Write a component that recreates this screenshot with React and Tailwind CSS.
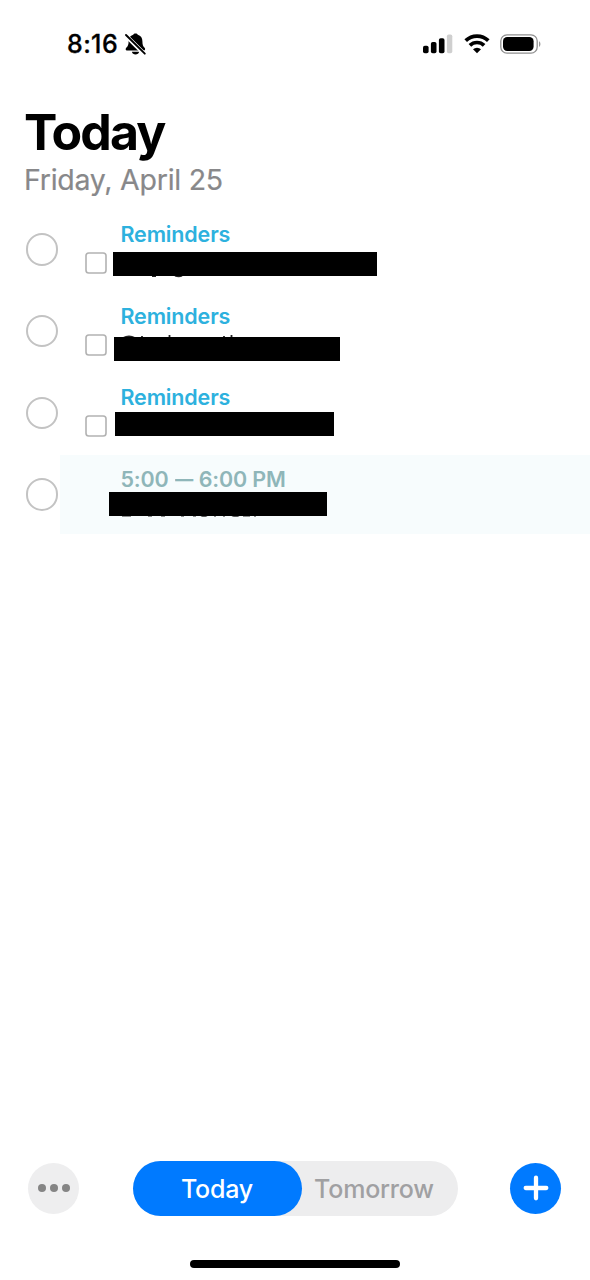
function BellSlash() {
  return (
    <svg className="h-[24px] w-[24px]" viewBox="0 0 24 24" fill="none">
      <path d="M11.5 1.500c1.100 0 1.900.5 2.300 1.200 3 .9 4.600 3.200 4.600 6.500 0 3.800.8 5.100 2.200 6.500.9.900.6 2.700-.7 2.700H2.900c-1.300 0-1.700-1.600-.7-2.700C3.800 14.200 4.600 13 4.600 9.200c0-3.300 1.600-5.600 4.600-6.500.4-.7 1.200-1.200 2.300-1.200Z" fill="#000" />
      <path d="M7.900 19.700h7.200c-.3 1.800-1.800 2.800-3.600 2.800s-3.300-1-3.600-2.800Z" fill="#000" />
      <path d="M0 1.700 21.400 23" stroke="#fff" strokeWidth="4.200" />
      <path d="M2 3 20.800 21.700" stroke="#000" strokeWidth="1.900" strokeLinecap="round" />
    </svg>
  );
}

function Signal() {
  return (
    <svg className="h-[20px] w-[30px]" viewBox="0 0 30 20">
      <rect x="0" y="11.700" width="5.600" height="7.600" rx="1.800" fill="#000" />
      <rect x="7.900" y="8" width="5.600" height="11.300" rx="1.800" fill="#000" />
      <rect x="15.900" y="4.200" width="5.600" height="15.100" rx="1.800" fill="#000" />
      <rect x="23.900" y="0.500" width="5.400" height="18.800" rx="1.800" fill="#cfcfcf" />
    </svg>
  );
}

function Wifi() {
  return (
    <svg className="h-[20px] w-[26px]" viewBox="0 0 26 20" fill="none" stroke="#000" strokeWidth="3.700">
      <path d="M1.700 6.700a16.200 16.200 0 0 1 22.600 0" />
      <path d="M5.900 11.400a10.100 10.100 0 0 1 14.200 0" />
      <path d="M13 19.200 9 15.300a5.700 5.700 0 0 1 8 0Z" fill="#000" stroke="none" />
    </svg>
  );
}

function Battery() {
  return (
    <svg className="h-[20px] w-[42px]" viewBox="0 0 42 20" fill="none">
      <rect x="0.800" y="0.800" width="36.400" height="18.400" rx="6.200" stroke="#8f8f8f" strokeWidth="1.300" />
      <rect x="3" y="3" width="30.600" height="14" rx="4.200" fill="#000" />
      <path d="M39 7.200c1.900.7 1.900 4.900 0 5.600Z" fill="#999" />
    </svg>
  );
}

function Circle() {
  return <div className="mt-[24.200px] ml-[25.500px] size-[32.500px] shrink-0 rounded-full border-2 border-[#c3c3c3] bg-white" />;
}

function Marks({ className, width, children }) {
  return (
    <svg className={className} width={width} height="4" viewBox={`0 0 ${width} 4`} fill="none" stroke="#222" strokeWidth="1.800">
      {children}
    </svg>
  );
}

function Row({ label, bar, marks }) {
  return (
    <div className="relative flex h-[81.670px]">
      <Circle />
      <svg className="mt-[43px] ml-[26.500px] size-[22px]" viewBox="0 0 22 22" fill="none">
        <rect x="1" y="1" width="20" height="20" rx="2.800" stroke="#b2b2b2" strokeWidth="1.600" />
      </svg>
      <div className="ml-[14px] pt-[12px] text-[21.500px] leading-[27px] font-semibold tracking-[-0.150px] text-[#2db1de]">{label}</div>
      {marks}
      <div className={`absolute h-[24px] bg-black ${bar}`} />
    </div>
  );
}

export default function App() {
  return (
    <div className="flex h-[1280px] w-[590px] flex-col overflow-hidden bg-white font-['Inter',sans-serif] text-black">
      <div className="flex h-[88px] items-center pl-[67px]">
        <div className="w-[57px] text-[25px] leading-[30px] font-medium tracking-[0.400px] whitespace-nowrap [-webkit-text-stroke:0.300px_#000]">8:16</div>
        <BellSlash />
        <div className="ml-[275px] flex items-center gap-[10.500px]">
          <Signal />
          <Wifi />
          <Battery />
        </div>
      </div>

      <header className="h-[121px] pl-[24px]">
        <h1 className="pt-[13.500px] text-[50px] leading-[60px] font-bold tracking-[-1.900px]">Today</h1>
        <p className="mt-[0.500px] text-[28.500px] leading-[36px] tracking-[-0.250px] text-[#88888a] [-webkit-text-stroke:0.200px_#88888a]">Friday, April 25</p>
      </header>

      <main className="flex-1">
        <Row
          label="Reminders"
          bar="left-[112.500px] top-[43.300px] w-[264.500px]"
          marks={
            <Marks className="absolute top-[65.500px] left-[148px]" width={38}>
              <path d="M4 1h4M27 0.600q4 1.300 7 0" />
            </Marks>
          }
        />
        <Row
          label="Reminders"
          bar="left-[113.500px] top-[46.300px] w-[226.500px]"
          marks={
            <Marks className="absolute top-[44px] left-[120px]" width={116}>
              <path d="M3 3q6-3 12 0M22 1v3M49.500 0v4M104 1v3M111.500 0v4" />
            </Marks>
          }
        />
        <Row label="Reminders" bar="left-[115px] top-[40.100px] w-[218.500px]" />
        <div className="relative flex h-[80px]">
          <Circle />
          <div className="mt-[1px] ml-[2px] h-[79.500px] flex-1 bg-[#f7fcfd] pt-[11px] pl-[60.500px]">
            <div className="flex gap-[6px] text-[21.500px] leading-[27px] font-semibold tracking-[-0.150px] text-[#8fb6b9]">
              <span>5:00</span>
              <span className="inline-block w-[18px] origin-left scale-x-[0.850]">—</span>
              <span>6:00 PM</span>
            </div>
          </div>
          <Marks className="absolute top-[60.500px] left-[120px]" width={138}>
            <path d="M2 1.600h9M28 1.600h4M41 1.600h4M61 1.600h3M73 1.600h3M81 1.400q3 1 6 0M94 1.600h2M103 1.600h2M112 1.400q4 1 7 0M123 1.600h7M134 1.600h2" />
          </Marks>
          <div className="absolute top-[38px] left-[109px] h-[24px] w-[218px] bg-black" />
        </div>
      </main>

      <nav className="flex h-[56px] items-center pl-[28px]">
        <button className="flex size-[51px] items-center justify-center gap-[4px] rounded-full bg-[#eeeeef]">
          <span className="size-[8px] rounded-full bg-[#858585]" />
          <span className="size-[8px] rounded-full bg-[#858585]" />
          <span className="size-[8px] rounded-full bg-[#858585]" />
        </button>
        <div className="ml-[53.500px] flex h-[55px] w-[325.500px] rounded-full bg-[#ededee] text-[25px] leading-[56px] font-medium tracking-[-0.200px]">
          <button className="w-[169px] rounded-full bg-[#007aff] text-white">Today</button>
          <button className="w-[145px] text-[#a0a0a2]">Tomorrow</button>
        </div>
        <button className="ml-[52px] flex size-[51px] items-center justify-center rounded-full bg-[#007aff]">
          <svg className="size-[26px]" viewBox="0 0 26 26" stroke="#fff" strokeWidth="4.300" strokeLinecap="round">
            <path d="M13 2.700v20.600M2.700 13h20.600" />
          </svg>
        </button>
      </nav>
      <div className="flex h-[64px] justify-center pt-[44px]">
        <div className="h-[8px] w-[210px] rounded-full bg-black" />
      </div>
    </div>
  );
}
